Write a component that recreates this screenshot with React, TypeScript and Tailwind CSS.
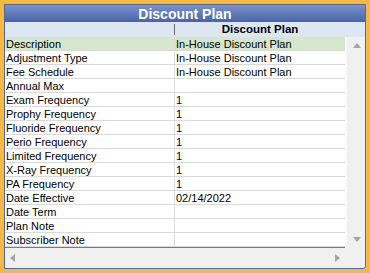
import React from 'react';

const rows: [string, string][] = [
  ['Description', 'In-House Discount Plan'],
  ['Adjustment Type', 'In-House Discount Plan'],
  ['Fee Schedule', 'In-House Discount Plan'],
  ['Annual Max', ''],
  ['Exam Frequency', '1'],
  ['Prophy Frequency', '1'],
  ['Fluoride Frequency', '1'],
  ['Perio Frequency', '1'],
  ['Limited Frequency', '1'],
  ['X-Ray Frequency', '1'],
  ['PA Frequency', '1'],
  ['Date Effective', '02/14/2022'],
  ['Date Term', ''],
  ['Plan Note', ''],
  ['Subscriber Note', ''],
];

function Arrow({ dir }: { dir: 'up' | 'down' | 'left' | 'right' }) {
  const pts = {
    up: '0,7 4,2 8,7',
    down: '0,1 4,6 8,1',
    left: '6,0 1,4 6,8',
    right: '2,0 7,4 2,8',
  }[dir];
  return (
    <svg width="8" height="8" viewBox="0 0 8 8">
      <polygon points={pts} fill="#a6a6a6" />
    </svg>
  );
}

export default function App() {
  return (
    <div
      className="w-[370px] h-[273px] bg-[#f6b943] p-[4px]"
      style={{ fontFamily: '"Liberation Sans", Arial, sans-serif' }}
    >
      <div className="w-full h-full border border-[#4d67a8] rounded-br-[3px] bg-[#f0f0f0] flex flex-col overflow-hidden">
        <div className="h-[17px] bg-gradient-to-b from-[#7a93cd] to-[#4a63a6] flex items-center justify-center">
          <span className="text-white font-bold text-[14px] leading-none">Discount Plan</span>
        </div>

        <div className="h-[15px] bg-[#dde7f2] flex">
          <div className="w-[170px] flex justify-end items-center">
            <div className="w-px h-[11px] bg-[#6e6e6e]" />
          </div>
          <div className="w-[170px] flex items-center justify-center text-[11.5px] font-bold text-black leading-none pt-[1px]">
            Discount Plan
          </div>
        </div>

        <div className="flex">
          <div className="w-[340px] bg-white border-b border-[#7a7a7a]">
            {rows.map(([label, value], i) => (
              <div
                key={label}
                className={`h-[14px] flex text-[11px] leading-[15px] text-black ${i === 0 ? 'bg-[#d4e7cd]' : ''}`}
              >
                <div className="w-[170px] pl-[1px] border-r border-b border-[#dadada] whitespace-nowrap overflow-hidden">
                  {label}
                </div>
                <div className="w-[170px] pl-[1px] border-b border-[#dadada] whitespace-nowrap overflow-hidden">
                  {value}
                </div>
              </div>
            ))}
          </div>
          <div className="w-[20px] border-l-2 border-[#fafafa] bg-[#f0f0f0] flex flex-col justify-between items-center py-[4px] pl-[1px]">
            <Arrow dir="up" />
            <Arrow dir="down" />
          </div>
        </div>

        <div className="flex-1 flex">
          <div className="w-[340px] flex items-center justify-between px-[4px]">
            <Arrow dir="left" />
            <Arrow dir="right" />
          </div>
          <div className="w-[20px]" />
        </div>
      </div>
    </div>
  );
}
